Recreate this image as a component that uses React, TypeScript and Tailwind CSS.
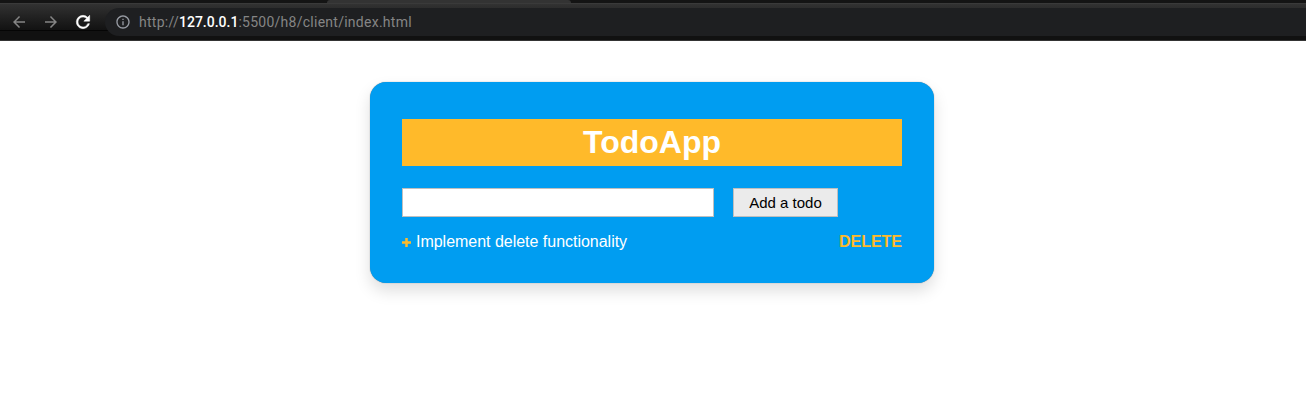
import React from "react";
import { MdArrowBack, MdArrowForward, MdInfoOutline } from "react-icons/md";

function RefreshIcon() {
  return (
    <svg viewBox="0 0 24 24" className="ml-[13px] size-5 text-white">
      <path
        d="M17.65 6.35A7.958 7.958 0 0 0 12 4a8 8 0 1 0 7.73 10h-2.08A5.99 5.99 0 0 1 12 18a6 6 0 1 1 0-12c1.66 0 3.14.69 4.22 1.78L13 11h7V4z"
        fill="currentColor"
        stroke="currentColor"
        strokeWidth="0.6"
      />
    </svg>
  );
}

function BrowserBar() {
  return (
    <header className="flex h-[41px] flex-col border-b border-[#343434] bg-[#111111]">
      <div className="flex h-[3px] shrink-0 bg-[#141414]">
        <div className="ml-[327px] h-[3px] w-[244px] rounded-t-sm bg-[#333333]" />
      </div>
      <div className="flex h-[28px] shrink-0 border-t border-[#3a3a3a] border-b border-b-[#050505] bg-linear-to-b from-[#323232] to-[#121212] pt-1">
        <nav className="flex h-7 w-[105px] shrink-0 items-center pl-[10px]">
          <MdArrowBack className="size-[18px] text-[#858585]" />
          <MdArrowForward className="ml-[14px] size-[18px] text-[#858585]" />
          <RefreshIcon />
        </nav>
        <div className="flex h-7 flex-1 items-center rounded-l-full bg-[#1e1f21] pl-[10px]">
          <MdInfoOutline className="size-4 text-[#989ca4]" />
          <span className="ml-2 font-[Roboto,sans-serif] text-[14px] leading-5 tracking-[0.26px] whitespace-nowrap text-[#858585]">
            http://<span className="font-medium tracking-[0px] text-white">127.0.0.1</span>:5500/h8/client/index.html
          </span>
        </div>
      </div>
    </header>
  );
}

export default function App() {
  return (
    <div className="h-[406px] overflow-hidden bg-white">
      <BrowserBar />
      <main className="mt-[41px] ml-[370px] h-[201px] w-[564px] rounded-[16px] bg-[#009df1] px-8 pt-[37px] font-['Liberation_Sans',Arial,sans-serif] shadow-[0_0_1px_rgba(0,0,0,0.5),0_8px_16px_rgba(0,0,0,0.13)]">
        <h1 className="h-[47px] bg-[#ffba2a] text-center text-[32px] leading-[47px] font-bold text-white">TodoApp</h1>
        <form className="mt-[22px] flex gap-[19px]" onSubmit={(e) => e.preventDefault()}>
          <input type="text" aria-label="Todo" className="h-[29px] w-[312px] border border-[#bfbfbf] bg-white px-2 outline-none" />
          <button type="submit" className="h-[29px] w-[105px] border border-[#bfbfbf] bg-[#ebebeb] pt-0.5 text-[15px] text-black">
            Add a todo
          </button>
        </form>
        <ul className="mt-[15px]">
          <li className="flex h-5 items-center text-[16px] leading-5 tracking-[-0.02px] text-white">
            <svg viewBox="0 0 9 9" className="mr-[5px] size-[9px] text-[#ffba2a]">
              <path d="M4.5 0v9M0 4.5h9" fill="none" stroke="currentColor" strokeWidth="2.5" />
            </svg>
            <span>Implement delete functionality</span>
            <button type="button" className="ml-auto font-bold text-[#ffba2a]">DELETE</button>
          </li>
        </ul>
      </main>
    </div>
  );
}
